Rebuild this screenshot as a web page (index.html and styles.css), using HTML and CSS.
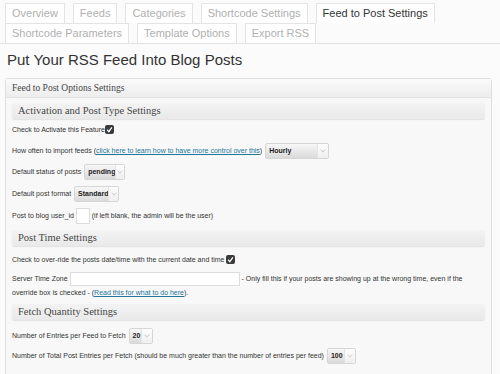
FILE: index.html
```html
<!DOCTYPE html>
<html lang="en">
  <head>
    <meta charset="utf-8" />
    <title>Feed to Post Settings</title>
    <link rel="stylesheet" href="styles.css">
  </head>
  <body>
    <nav class="tabs">
      <a class="tab" href="#overview">Overview</a>
      <a class="tab" href="#feeds">Feeds</a>
      <a class="tab" href="#categories">Categories</a>
      <a class="tab" href="#shortcode">Shortcode Settings</a>
      <a class="tab active" href="#feedtopost">Feed to Post Settings</a>
      <a class="tab" href="#params">Shortcode Parameters</a>
      <a class="tab" href="#template">Template Options</a>
      <a class="tab" href="#export">Export RSS</a>
    </nav>

    <h2 class="page-title">Put Your RSS Feed Into Blog Posts</h2>

    <div class="postbox">
      <h3 class="postbox-head">Feed to Post Options Settings</h3>
      <div class="inside">
        <h4 class="sub">Activation and Post Type Settings</h4>
        <div class="row r1">Check to Activate this Feature<span class="check"><svg viewBox="0 0 9 9" width="9" height="9"><path d="M2.2 4.8 L3.8 6.6 L6.9 2.3" fill="none" stroke="#fff" stroke-width="1.3"/></svg></span></div>
        <div class="row r2">How often to import feeds (<a href="#more">click here to learn how to have more control over this</a>) <span class="select w-hourly"><span class="val">Hourly</span><span class="arr"><svg viewBox="0 0 7 5" width="6" height="4"><path d="M0.8 0.8 L3.5 4 L6.2 0.8" fill="none" stroke="#bbb" stroke-width="0.9"/></svg></span></span></div>
        <div class="row r3">Default status of posts <span class="select w-pending"><span class="val">pending</span><span class="arr"><svg viewBox="0 0 7 5" width="6" height="4"><path d="M0.8 0.8 L3.5 4 L6.2 0.8" fill="none" stroke="#bbb" stroke-width="0.9"/></svg></span></span></div>
        <div class="row r4">Default post format <span class="select w-standard"><span class="val">Standard</span><span class="arr"><svg viewBox="0 0 7 5" width="6" height="4"><path d="M0.8 0.8 L3.5 4 L6.2 0.8" fill="none" stroke="#bbb" stroke-width="0.9"/></svg></span></span></div>
        <div class="row r5">Post to blog user_id <span class="input w-user"></span> (if left blank, the admin will be the user)</div>

        <h4 class="sub sub2">Post Time Settings</h4>
        <div class="row r6">Check to over-ride the posts date/time with the current date and time <span class="check"><svg viewBox="0 0 9 9" width="9" height="9"><path d="M2.2 4.8 L3.8 6.6 L6.9 2.3" fill="none" stroke="#fff" stroke-width="1.3"/></svg></span></div>
        <p class="para">Server Time Zone <span class="input w-zone"></span> - Only fill this if your posts are showing up at the wrong time, even if the override box is checked - (<a href="#help">Read this for what to do here</a>).</p>

        <h4 class="sub sub3">Fetch Quantity Settings</h4>
        <div class="row r8">Number of Entries per Feed to Fetch <span class="select w-20"><span class="val">20</span><span class="arr"><svg viewBox="0 0 7 5" width="6" height="4"><path d="M0.8 0.8 L3.5 4 L6.2 0.8" fill="none" stroke="#bbb" stroke-width="0.9"/></svg></span></span></div>
        <div class="row r9">Number of Total Post Entries per Fetch (should be much greater than the number of entries per feed) <span class="select w-100"><span class="val">100</span><span class="arr"><svg viewBox="0 0 7 5" width="6" height="4"><path d="M0.8 0.8 L3.5 4 L6.2 0.8" fill="none" stroke="#bbb" stroke-width="0.9"/></svg></span></span></div>
      </div>
    </div>
  </body>
</html>
```

FILE: styles.css
```css
html {
  box-sizing: border-box;
}

* {
  box-sizing: inherit;
}

body {
  margin: 0;
  background-color: #fbfbfb;
  color: #333;
  font: 7px / 1.3 "Liberation Sans", Arial, sans-serif;
  overflow: hidden;
}

a {
  color: #21759b;
}

.tabs {
  display: flex;
  flex-wrap: wrap;
  column-gap: 8px;
  padding: 3px 0 0 5px;
  border-bottom: 1px solid #e2e2e2;
}

.tab {
  display: block;
  height: 20px;
  padding: 0 6px;
  border: 1px solid #e4e4e4;
  border-bottom: none;
  background-color: #fff;
  color: #b0b0b0;
  font-size: 11px;
  line-height: 19px;
  text-decoration: none;
}

.tab.active {
  color: #333;
}

.page-title {
  margin: 7px 0 9px 7px;
  font-size: 15px;
  font-weight: normal;
  line-height: 18px;
  color: #333;
}

.postbox {
  margin: 0 8px 0 5px;
  border: 1px solid #dfdfdf;
  border-radius: 3px;
  background-color: #f8f8f8;
  height: 300px;
}

.postbox-head {
  margin: 0;
  height: 19px;
  padding-left: 6px;
  border-bottom: 1px solid #e2e2e2;
  background: linear-gradient(#fafafa, #ededed);
  font: 9.5px / 18px "Liberation Serif", Georgia, serif;
  color: #464646;
}

.inside {
  padding: 0 6px;
}

.sub {
  margin: 5px 0 0;
  height: 16px;
  padding-left: 6px;
  border-radius: 2px;
  background: linear-gradient(#f3f3f3, #e9e9e9);
  box-shadow: 0 1px 1px #e2e2e2;
  font: 10.5px / 16px "Liberation Serif", Georgia, serif;
  font-weight: normal;
  color: #464646;
}

.sub2 {
  margin-top: 4px;
}

.sub3 {
  margin-top: 4px;
}

.row {
  height: 21px;
  line-height: 21px;
  white-space: nowrap;
}

.r3,
.r4 {
  height: 22px;
  line-height: 22px;
}

.r6 {
  margin-top: 4px;
  height: 20px;
  line-height: 20px;
}

.r8 {
  margin-top: 6px;
  height: 20px;
  line-height: 20px;
}

.r9 {
  height: 19px;
  line-height: 19px;
}

.para {
  margin: 2px 0 0;
  line-height: 14px;
}

.check {
  display: inline-block;
  width: 9px;
  height: 9px;
  border-radius: 2px;
  background-color: #3b3b3b;
  vertical-align: middle;
  margin-top: -2px;
}

.check svg {
  display: block;
}

.select {
  display: inline-flex;
  align-items: center;
  height: 16px;
  margin-left: 1px;
  border: 1px solid #d6d6d6;
  border-radius: 2px;
  background: linear-gradient(#f7f7f7, #dadada);
  font-weight: bold;
  color: #222;
  line-height: 14px;
  vertical-align: middle;
}

.select .val {
  flex: 1;
  padding-left: 3px;
}

.select .arr {
  display: flex;
  align-items: center;
  justify-content: center;
  width: 11px;
  height: 100%;
  border-left: 1px solid #e4e4e4;
  background: linear-gradient(#fdfdfd, #efefef);
}

.w-hourly { width: 64px; }
.w-pending { width: 41px; }
.w-standard { width: 45px; }
.w-20 { width: 24px; }
.w-100 { width: 29px; }

.input {
  display: inline-block;
  height: 16px;
  border: 1px solid #dcdcdc;
  background-color: #fff;
  vertical-align: middle;
}

.w-user {
  width: 14px;
}

.w-zone {
  width: 170px;
  height: 14px;
}
```
